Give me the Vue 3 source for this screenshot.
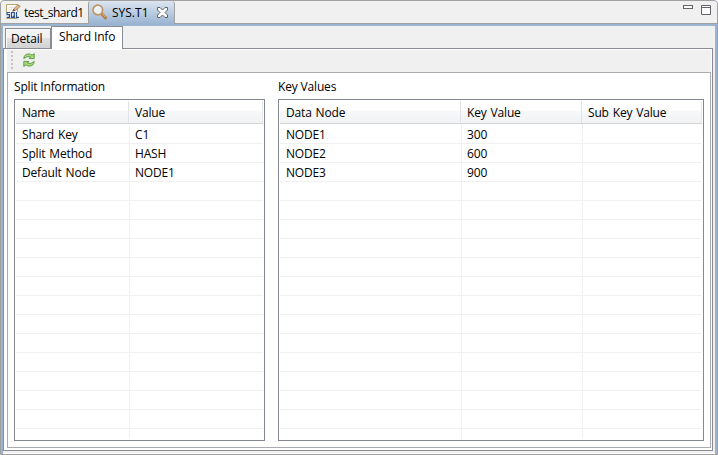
<script setup>
const tables = [
  {
    title: 'Split Information',
    kind: 'split',
    columns: ['Name', 'Value'],
    rows: [['Shard Key', 'C1'], ['Split Method', 'HASH'], ['Default Node', 'NODE1']],
  },
  {
    title: 'Key Values',
    kind: 'keys',
    columns: ['Data Node', 'Key Value', 'Sub Key Value'],
    rows: [['NODE1', '300', ''], ['NODE2', '600', ''], ['NODE3', '900', '']],
  },
]
const visibleRows = 16
const cell = (table, row, col) => (table.rows[row] ? table.rows[row][col] : '')
</script>

<template>
  <div class="editor">
    <header class="strip">
      <div class="file-tab">
        <svg class="sql-icon" width="16" height="16" viewBox="0 0 16 16">
          <path d="M.5 14.5V.5H11.5V14.5Z" fill="#fbfaf4" stroke="#b9a66d" />
          <path d="M3 3.5H8M3 5.5H6" stroke="#dbe2ea" />
          <rect x="0" y="8" width="13" height="6" fill="#f5f7fb" />
          <path d="M4 8.5H1V10.7H3.5V13.3H.6M5.5 8.5H8.3V13.3H5.5ZM7 12l2 2.2M10.5 8V13.3H13" fill="none" stroke="#2c4f8d" stroke-width="1.2" />
          <path d="M6.5 7.3L8 4.5L12 .7L14.3 2.3L9.8 6.3Z" fill="#dcb88a" stroke="#9d7a49" stroke-width=".7" />
          <path d="M6.5 7.3L7.6 5.1L9.2 6.4Z" fill="#4e463c" />
        </svg>
        <span>test_shard1</span>
      </div>
      <div class="file-tab active">
        <svg class="search-icon" width="16" height="17" viewBox="0 0 16 17">
          <path d="M9.5 10.5L13.4 14.8" stroke="#a87440" stroke-width="3" stroke-linecap="round" />
          <path d="M10 10.5L13.2 14" stroke="#dba05c" stroke-width="1.3" stroke-linecap="round" />
          <circle cx="5.8" cy="7" r="4.8" fill="#eaf0f5" stroke="#c29460" stroke-width="1.7" />
          <path d="M3.1 6.5Q3.8 4.2 6.3 4.1" fill="none" stroke="#fff" stroke-width="1.2" />
        </svg>
        <span>SYS.T1</span>
        <svg class="close-icon" width="11" height="11" viewBox="0 0 11 11">
          <path d="M.5 .5H3L5.5 3L8 .5H10.5V3L8 5.5L10.5 8V10.5H8L5.5 8L3 10.5H.5V8L3 5.5L.5 3V.5Z" fill="#fff" stroke="#606166" />
        </svg>
      </div>
      <div class="window-buttons">
        <svg width="10" height="4" viewBox="0 0 10 4"><rect x=".5" y=".5" width="9" height="3" fill="#fff" stroke="#656369" /></svg>
        <svg width="10" height="10" viewBox="0 0 10 10"><path d="M.5 .5H9.5V9.5H.5ZM0 2.5H10" fill="#fff" stroke="#656369" /></svg>
      </div>
    </header>
    <main class="body">
      <nav class="page-tabs">
        <div class="page-tab detail">Detail</div>
        <div class="page-tab selected">Shard Info</div>
      </nav>
      <section class="page">
        <div class="toolbar">
          <div class="grip"><i v-for="n in 5" :key="n"></i></div>
          <svg width="12" height="14" viewBox="0 0 12 14">
            <g fill="#a9dc78" stroke="#468a2e" stroke-width=".8" stroke-linejoin="round">
              <path d="M.8 5.6Q1 1.2 5.5 .9Q7.6 .9 9 2.2L11.2 .6V5.6H6.2L7.6 3.9Q4.1 2.4 .8 5.6Z" />
              <path d="M11.2 8.4Q11 12.8 6.5 13.1Q4.4 13.1 3 11.8L.8 13.4V8.4H5.8L4.4 10.1Q7.9 11.6 11.2 8.4Z" />
            </g>
          </svg>
        </div>
        <div class="panels">
          <section v-for="table in tables" :key="table.title" :class="['panel', table.kind]">
            <h2>{{ table.title }}</h2>
            <div class="table">
              <div class="line head">
                <span v-for="name in table.columns" :key="name">{{ name }}</span>
              </div>
              <div v-for="r in visibleRows" :key="r" class="line row">
                <span v-for="(name, c) in table.columns" :key="name">{{ cell(table, r - 1, c) }}</span>
              </div>
              <div class="line rest"><span v-for="name in table.columns" :key="name"></span></div>
            </div>
          </section>
        </div>
      </section>
    </main>
  </div>
</template>

<style>
body { margin: 0; background: #fff; overflow: hidden; }
</style>

<style scoped>
* { box-sizing: border-box; }
svg { display: block; flex: none; }
.editor {
  width: 718px; height: 455px; display: flex; flex-direction: column;
  border: 1px solid #a0a0a0; border-radius: 4px 4px 0 0; background: #99b4d1; overflow: hidden;
  font: 12px/18px "Open Sans", "Noto Sans", sans-serif; color: #000; white-space: nowrap; letter-spacing: -.17px;
}
.strip { height: 23px; flex: none; display: flex; background: #f0f0f0; box-shadow: inset 0 -1px #a0a0a0; }
.file-tab { width: 87px; height: 23px; display: flex; padding: 3px 0 0 5px; }
.file-tab span { margin-left: 2px; letter-spacing: -.5px; }
.file-tab.active {
  width: 87px; padding: 2px 0 0 3px; border: solid #a0a0a0; border-width: 0 1px;
  border-radius: 3px 3px 0 0; background: linear-gradient(#dce5f0, #99b4d1);
}
.file-tab.active span { width: 37px; margin: 1px 0 0 4px; letter-spacing: 0; }
.close-icon { margin: 4px 0 0 8px; }
.window-buttons { margin-left: auto; padding: 4px 6px 0 0; display: flex; gap: 8px; }
.body {
  height: 428px; margin: 2px 2px 0; flex: none; background: #f0f0f0;
  display: flex; flex-direction: column; box-shadow: inset 0 -1px #fff;
}
.page-tabs { height: 22px; flex: none; display: flex; align-items: flex-end; padding-left: 2px; }
.page-tab { border: 1px solid #898c95; border-bottom: 0; }
.detail {
  width: 46px; height: 20px; padding: 1px 0 0 5px;
  background: linear-gradient(#f2f2f2 0 48%, #e0e0e0 50%, #d2d2d2); box-shadow: inset 1px 1px #fbfbfb;
}
.selected { width: 72px; height: 23px; margin-bottom: -1px; padding: 1px 0 0 7px; background: #fff; z-index: 1; }
.page {
  width: 710px; height: 403px; border: 1px solid #898c95; background: #fff;
  padding: 1px 1px 2px 3px; display: flex; flex-direction: column;
}
.toolbar { height: 22px; flex: none; background: #f0f0f0; display: flex; padding-left: 4px; }
.grip { display: flex; flex-direction: column; gap: 2px; margin: 1px 10px 0 0; }
.grip i { width: 2px; height: 2px; background: #c2c2c2; }
.toolbar > svg { margin-top: 3px; }
.panels {
  height: 376px; border: 1px solid #a9abb1; background: #fff;
  display: flex; gap: 13px; padding: 5px 6px 0;
}
h2 { margin: 0; height: 21px; font: inherit; }
.table { height: 342px; border: 1px solid #828790; padding: 1px; display: flex; flex-direction: column; }
.split { width: 251px; }
.keys { width: 426px; }
.line { display: grid; flex: none; word-spacing: 1px; }
.split .line { grid-template-columns: 113px 1fr; }
.keys .line { grid-template-columns: 181px 121px 1fr; }
.split .head { grid-template-columns: 112px 1fr; }
.keys .head { grid-template-columns: 180px 121px 1fr; }
.head { height: 23px; border-bottom: 1px solid #d5d5d5; background: linear-gradient(#fff 0 42%, #f7f8fa 45%, #f1f2f4); }
.row { height: 19px; border-bottom: 1px solid #f0f0f0; }
.head + .row { height: 20px; }
.line span { padding-left: 5px; border-left: 1px solid #f0f0f0; line-height: 20px; }
.line span:first-child { border-left-color: transparent; }
.head span:not(:first-child) { padding-left: 6px; border-left-color: #e0e2e5; }
.head span { line-height: 24px; height: 22px; }
.head span:last-child { border-right: 1px solid #e8e9ec; }
.row span { height: 18px; }
.head + .row span { height: 19px; line-height: 22px; }
.rest { height: 10px; }
</style>
